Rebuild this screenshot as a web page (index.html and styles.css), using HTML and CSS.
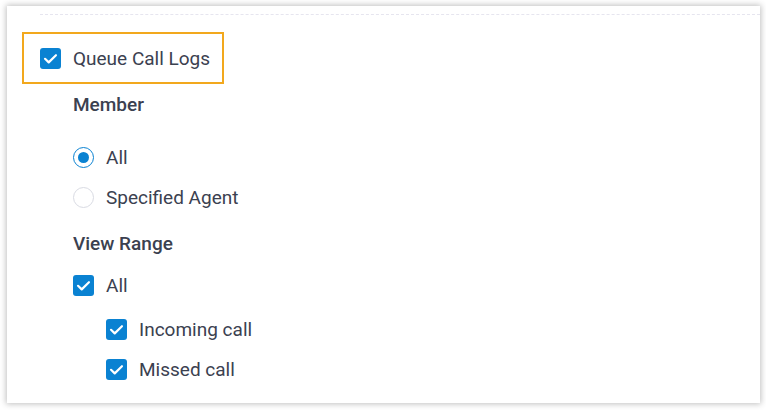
FILE: index.html
```html
<!DOCTYPE html>
<html>
<head>
<meta charset="utf-8">
<link rel="stylesheet" href="styles.css">
</head>
<body>
<div class="panel">
  <div class="divider"></div>
  <div class="highlight">
    <span class="cb checked"><svg viewBox="0 0 20 20"><path d="M4.8 10.3l3.5 3.4L15.2 6.9" fill="none" stroke="#fff" stroke-width="2.1" stroke-linecap="round" stroke-linejoin="round"/></svg></span>
    <span class="label">Queue Call Logs</span>
  </div>
  <div class="content">
    <div class="heading member">Member</div>
    <div class="row"><span class="radio on"><span class="dot"></span></span><span class="label">All</span></div>
    <div class="row"><span class="radio"></span><span class="label">Specified Agent</span></div>
    <div class="heading range">View Range</div>
    <div class="row first"><span class="cb checked"><svg viewBox="0 0 20 20"><path d="M4.8 10.3l3.5 3.4L15.2 6.9" fill="none" stroke="#fff" stroke-width="2.1" stroke-linecap="round" stroke-linejoin="round"/></svg></span><span class="label">All</span></div>
    <div class="sub">
      <div class="row"><span class="cb checked"><svg viewBox="0 0 20 20"><path d="M4.8 10.3l3.5 3.4L15.2 6.9" fill="none" stroke="#fff" stroke-width="2.1" stroke-linecap="round" stroke-linejoin="round"/></svg></span><span class="label">Incoming call</span></div>
      <div class="row"><span class="cb checked"><svg viewBox="0 0 20 20"><path d="M4.8 10.3l3.5 3.4L15.2 6.9" fill="none" stroke="#fff" stroke-width="2.1" stroke-linecap="round" stroke-linejoin="round"/></svg></span><span class="label">Missed call</span></div>
    </div>
  </div>
</div>
</body>
</html>
```

FILE: styles.css
```css
* { box-sizing: border-box; }
html, body { margin: 0; padding: 0; background: #ffffff; }
body {
  font-family: Roboto, "Noto Sans", sans-serif;
  color: #3b4150;
  width: 766px;
  height: 410px;
  overflow: hidden;
  padding: 6px 0 0 7px;
}
.panel {
  width: 753px;
  height: 397px;
  background: #fff;
  box-shadow: 0 0 6px 1px rgba(0,0,0,0.25);
  padding: 8px 0 0 15px;
}
.divider {
  margin-left: 18px;
  border-top: 1px dashed #e6e5ef;
  height: 0;
}
.highlight {
  margin-top: 17px;
  width: 202px;
  height: 52px;
  border: 2px solid #f2a81d;
  display: flex;
  align-items: center;
  padding-left: 16px;
  gap: 12px;
}
.cb {
  width: 21px;
  height: 21px;
  border-radius: 3px;
  display: inline-flex;
  flex: none;
}
.cb.checked { background: #0a82d2; }
.cb svg { width: 21px; height: 21px; display: block; }
.label {
  font-size: 19px;
  line-height: 24px;
  padding-top: 2px;
}
.content { margin-left: 51px; }
.heading {
  font-size: 19px;
  line-height: 24px;
  font-weight: 500;
  color: #3b4150;
}
.member { margin-top: 9px; margin-bottom: 20px; }
.range { margin-top: 15px; margin-bottom: 9px; }
.row {
  height: 40px;
  display: flex;
  align-items: center;
  gap: 12px;
}
.radio {
  width: 21px;
  height: 21px;
  border-radius: 50%;
  border: 1px solid #d9dbe3;
  display: inline-flex;
  align-items: center;
  justify-content: center;
  flex: none;
}
.radio.on { border-color: #0a82d2; }
.dot {
  width: 11px;
  height: 11px;
  border-radius: 50%;
  background: #0a82d2;
}
.sub { margin-left: 33px; margin-top: 4px; }
```
